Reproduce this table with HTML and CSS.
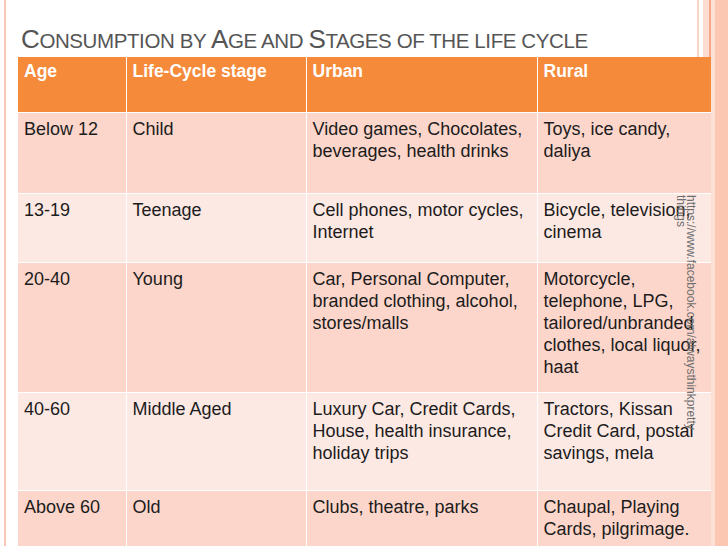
FILE: index.html
```html
<!DOCTYPE html>
<html>
<head>
<meta charset="utf-8">
<link rel="stylesheet" href="styles.css">
</head>
<body>
<div class="slide">
  <div class="content">
    <h1 class="title"><span class="cap">C</span>onsumption by <span class="cap">A</span>ge and <span class="cap">S</span>tages of the life cycle</h1>
    <table class="grid">
      <colgroup>
        <col class="c1"><col class="c2"><col class="c3"><col class="c4">
      </colgroup>
      <thead>
        <tr class="head">
          <th>Age</th><th>Life-Cycle stage</th><th>Urban</th><th>Rural</th>
        </tr>
      </thead>
      <tbody>
        <tr class="dark r1">
          <td>Below 12</td><td>Child</td><td>Video games, Chocolates, beverages, health drinks</td><td>Toys, ice candy, daliya</td>
        </tr>
        <tr class="light r2">
          <td>13-19</td><td>Teenage</td><td>Cell phones, motor cycles, Internet</td><td>Bicycle, television, cinema</td>
        </tr>
        <tr class="dark r3">
          <td>20-40</td><td>Young</td><td>Car, Personal Computer, branded clothing, alcohol, stores/malls</td><td>Motorcycle, telephone, LPG, tailored/unbranded clothes, local liquor, haat</td>
        </tr>
        <tr class="light r4">
          <td>40-60</td><td>Middle Aged</td><td>Luxury Car, Credit Cards, House, health insurance, holiday trips</td><td>Tractors, Kissan Credit Card, postal savings, mela</td>
        </tr>
        <tr class="dark r5">
          <td>Above 60</td><td>Old</td><td>Clubs, theatre, parks</td><td>Chaupal, Playing Cards, pilgrimage.</td>
        </tr>
      </tbody>
    </table>
  </div>
  <div class="watermark">https://www.facebook.com/alwaysthinkpretty<br>things</div>
</div>
</body>
</html>
```
FILE: styles.css
```css
html, body {
  margin: 0;
  padding: 0;
}
body {
  width: 728px;
  height: 546px;
  overflow: hidden;
  background: #ffffff;
  font-family: "Liberation Sans", Arial, sans-serif;
}
.slide {
  position: relative;
  width: 728px;
  height: 546px;
  background: linear-gradient(to right,
    #ffffff 0, #ffffff 4px,
    #f7c6b7 4px, #f7c6b7 6px,
    #ffffff 6px, #ffffff 697px,
    #fad3c7 697px, #fad3c7 699px,
    #ffffff 699px, #ffffff 703px,
    #fcdcd1 703px, #fcdcd1 709px,
    #f5a98b 709px, #f5a98b 711px,
    #fde1d7 711px, #fde1d7 715px,
    #fcc7b2 715px, #fcc7b2 728px);
}
.content {
  padding: 0 17px 0 18px;
}
.title {
  margin: 0;
  padding-top: 24px;
  height: 33px;
  font-weight: normal;
  font-size: 20.5px;
  line-height: 30px;
  text-transform: uppercase;
  color: #555555;
  white-space: nowrap;
  letter-spacing: -0.4px;
  padding-left: 3px;
  overflow: hidden;
}
.title .cap {
  font-size: 26px;
}
.grid {
  border-collapse: collapse;
  table-layout: fixed;
  width: 693px;
  font-size: 18px;
  line-height: 22px;
  color: #1c1c1c;
}
.c1 { width: 108px; }
.c2 { width: 180px; }
.c3 { width: 231px; }
.c4 { width: 174px; }
.grid th, .grid td {
  border: 1px solid #ffffff;
  vertical-align: top;
  text-align: left;
  padding: 5px 6px 0 6px;
}
.grid tr:first-child th { border-top: none; }
.grid th:first-child, .grid td:first-child { border-left: none; }
.grid th:last-child, .grid td:last-child { border-right: none; }
.head {
  background: #f68a3b;
  height: 55px;
}
.head th {
  color: #ffffff;
  font-weight: bold;
  font-size: 17.5px;
  padding-top: 3px;
}
.dark { background: #fcd6cb; }
.light { background: #fde9e4; }
.r1 { height: 81px; }
.r2 { height: 69px; }
.r3 { height: 130px; }
.r4 { height: 98px; }
.r5 { height: 56px; }
.watermark {
  position: absolute;
  left: 676px;
  top: 195px;
  writing-mode: vertical-rl;
  font-size: 12px;
  line-height: 10px;
  color: #6e6e6e;
  white-space: nowrap;
}
```
